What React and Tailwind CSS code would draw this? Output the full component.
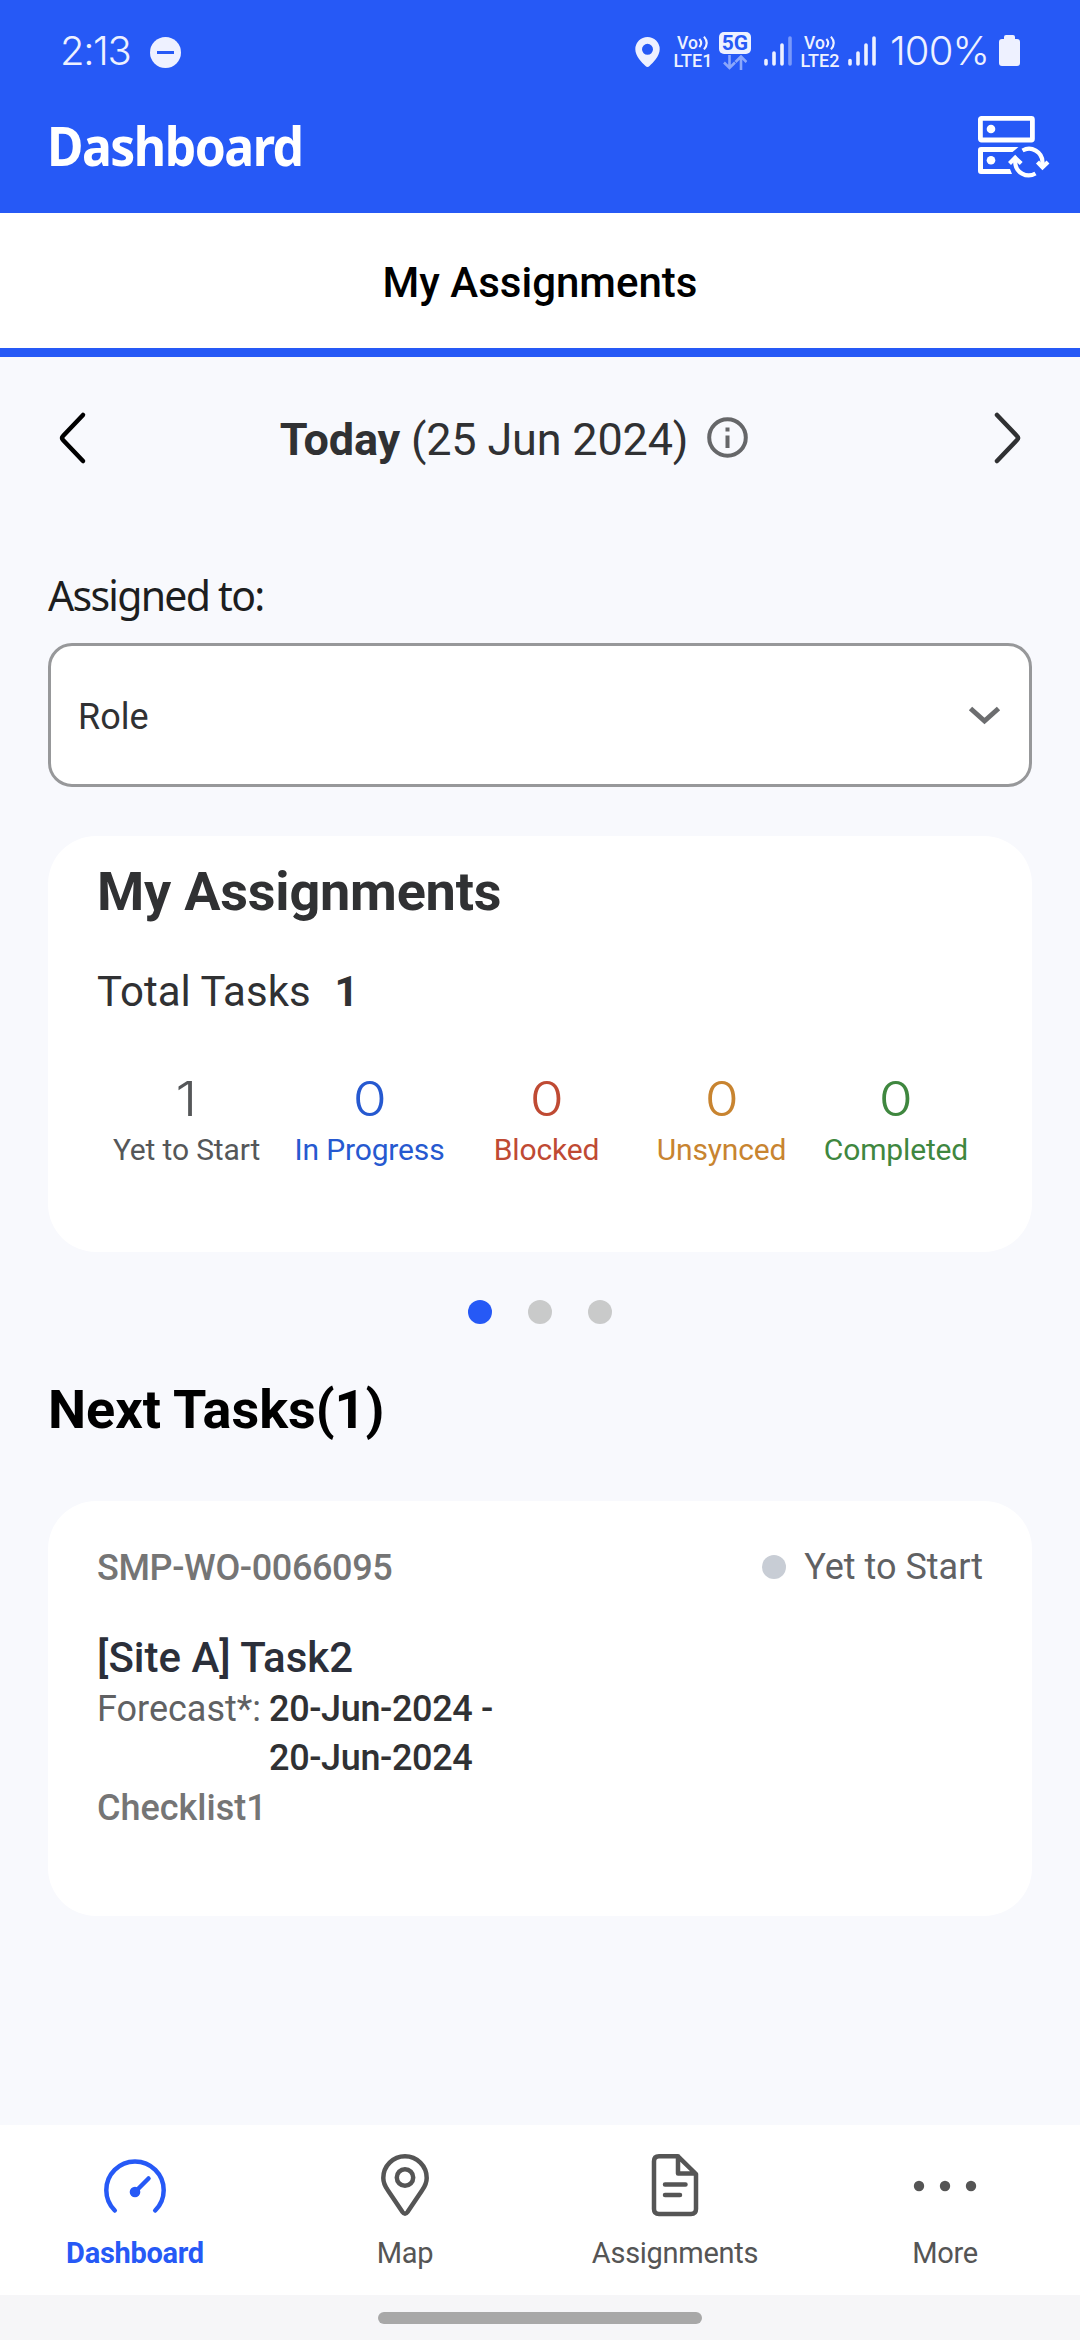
import React from 'react';

const StatusBar = () => {
    return (
        <div className="h-[101px] pl-[60px] pr-[60px] flex items-center text-[#eef1ff]">
            <span className="mt-px text-[40px] leading-none font-[350] tracking-[-0.035em] font-['Inter',sans-serif]">2:13</span>
            <svg className="ml-[20px] mt-1" width="31" height="31" viewBox="0 0 31 31">
                <circle cx="15.5" cy="15.5" r="15.5" fill="currentColor" />
                <path d="M7 15.500h17" stroke="#2659f6" strokeWidth="3" />
            </svg>
            <div className="flex-1" />
            <svg className="mt-0.5" width="25" height="30" viewBox="0 0 25 30">
                <path fill="currentColor" fillRule="evenodd" d="M12.500 0A12.200 12.200 0 0 0 .300 12.200C.300 19 7 25.500 10.500 29q2 2 4 0C18 25.500 24.700 19 24.700 12.200A12.200 12.200 0 0 0 12.500 0Zm0 6.800a5.500 5.500 0 1 1 0 11a5.500 5.500 0 0 1 0-11Z" />
            </svg>
            <VoLte sim="LTE1" className="ml-[12px]" />
            <div className="ml-[5px] w-8 flex flex-col items-center">
                <span className="w-8 h-[22px] rounded-[5px] bg-[#eef1ff] text-[#2659f6] text-[21px] leading-[22px] font-bold text-center font-['Roboto',sans-serif]">5G</span>
                <svg className="mt-px" width="24" height="15" viewBox="0 0 24 15" fill="none" stroke="#8ba7fb" strokeWidth="2.600">
                    <path d="M6.500 0v12.500M1 7.500l5.500 5.500L12 7.500M18 15V2M12.500 7L18 1.500L23.500 7" />
                </svg>
            </div>
            <Signal last="#7a99fa" className="ml-[13px]" />
            <VoLte sim="LTE2" className="ml-[7px]" />
            <Signal last="currentColor" className="ml-[7px]" />
            <span className="ml-[14px] mt-px w-[104px] text-[40px] leading-none font-[350] tracking-[-0.022em] whitespace-nowrap font-['Inter',sans-serif]">100%</span>
            <svg className="ml-[5px]" width="21" height="31" viewBox="0 0 21 31" fill="currentColor">
                <path d="M7 0h7q2 0 2 2v2h2q3 0 3 3v21q0 3-3 3H3q-3 0-3-3V7q0-3 3-3h2V2q0-2 2-2Z" />
            </svg>
        </div>
    );
};

const VoLte = ({ sim, className }) => (
    <div className={`w-[42px] flex flex-col items-center font-['Roboto',sans-serif] font-medium leading-[18px] mt-0.5 ${className}`}>
        <span className="flex items-center text-[17.5px]">
            Vo
            <svg width="11" height="16" viewBox="0 0 12 16" fill="none" stroke="currentColor" strokeWidth="2.300">
                <path d="M1.500 3.500q4 4.500 0 9M6.500 1q6 7 0 14" />
            </svg>
        </span>
        <span className="text-[18px]">{sim}</span>
    </div>
);

const Signal = ({ last, className }) => (
    <svg className={className} width="28" height="30" viewBox="0 0 28 30" strokeWidth="3.600" strokeLinecap="round" stroke="currentColor">
        <path d="M2 24.500V28M10 17V28M18 9V28" />
        <path d="M26 2V28" stroke={last} />
    </svg>
);

const ServerSyncIcon = () => (
    <svg width="74" height="64" viewBox="0 0 74 64" fill="none" stroke="white" strokeWidth="4.800">
        <rect x="2.400" y="2.400" width="52" height="21.600" rx="1" />
        <path fill="white" stroke="none" d="M3 31H40.500L34.500 36H5V53H32L34 58H3Q0 58 0 55V34Q0 31 3 31Z" />
        <circle cx="13" cy="13" r="4.300" fill="white" stroke="none" />
        <circle cx="13" cy="44.300" r="4.300" fill="white" stroke="none" />
        <path strokeWidth="4.200" d="M44.500 34.500A13.500 13.500 0 0 1 64.500 46V50M57.500 57.500A13.500 13.500 0 0 1 37.200 46V43" />
        <path strokeWidth="4.200" d="M59.500 46l5 5.200L70 46M31.500 47.500l5.700-5.700l6 5.700" />
    </svg>
);

const GaugeIcon = () => (
    <svg width="72" height="72" viewBox="0 0 72 72" fill="none" stroke="currentColor" strokeWidth="4.500" strokeLinecap="round">
        <path d="M15.800 59.500A28.700 28.700 0 1 1 56.200 59.500" />
        <path d="M36 41L49.500 27.500" />
        <circle cx="36" cy="41" r="5.300" fill="currentColor" stroke="none" />
    </svg>
);

const PinIcon = () => (
    <svg width="72" height="72" viewBox="0 0 72 72" fill="none" stroke="currentColor" strokeWidth="4.500" strokeLinejoin="round">
        <path d="M36 5.300A21.700 21.700 0 0 0 14.300 27C14.300 32 16.500 36 19 39.500L33.500 61q2.500 3.500 5 0L53 39.500C55.500 36 57.700 32 57.700 27A21.700 21.700 0 0 0 36 5.300Z" />
        <circle cx="36" cy="26.500" r="8.200" />
    </svg>
);

const DocIcon = () => (
    <svg width="72" height="72" viewBox="0 0 72 72" fill="none" stroke="currentColor" strokeWidth="4.500" strokeLinecap="round" strokeLinejoin="round">
        <path d="M39 5.300H20Q15 5.300 15 10.300V58Q15 63 20 63H52Q57 63 57 58V23L39 5.300V22.500H56" />
        <path d="M26 33.500H46.500M26 44H41" />
    </svg>
);

const MoreIcon = () => (
    <svg width="72" height="72" viewBox="0 0 72 72" fill="currentColor">
        <circle cx="10" cy="35" r="5.200" />
        <circle cx="36" cy="35" r="5.200" />
        <circle cx="62" cy="35" r="5.200" />
    </svg>
);

const stats = [
    { label: 'Yet to Start', value: 1, style: 'w-[175px] text-[#555759]' },
    { label: 'In Progress', value: 0, style: 'w-[191px] text-[#2659d0]' },
    { label: 'Blocked', value: 0, style: 'w-[163px] text-[#bf4a33]' },
    { label: 'Unsynced', value: 0, style: 'w-[187px] text-[#c88430]' },
    { label: 'Completed', value: 0, style: 'w-[162px] text-[#3f873f]' },
];

const navItems = [
    { label: 'Dashboard', icon: GaugeIcon, style: 'text-[#2659f6] font-bold' },
    { label: 'Map', icon: PinIcon, style: 'text-[#555555]' },
    { label: 'Assignments', icon: DocIcon, style: 'text-[#555555]' },
    { label: 'More', icon: MoreIcon, style: 'text-[#555555]' },
];

const App = () => {
    return (
        <div className="w-[1080px] h-[2340px] flex flex-col bg-[#f8f9fd] font-['Roboto',sans-serif] text-[#303133] overflow-hidden">
            {/* Header */}
            <header className="h-[213px] shrink-0 bg-[#2659f6]">
                <StatusBar />
                <div className="h-[94px] pl-[47px] pr-7 flex items-center justify-between text-white">
                    <h1 className="mb-[6px] text-[53px] leading-none font-bold tracking-[-0.03em] origin-left scale-x-[0.94] font-['Noto_Sans',sans-serif]">Dashboard</h1>
                    <ServerSyncIcon />
                </div>
            </header>

            {/* Tab */}
            <div className="h-36 shrink-0 bg-white border-b-[9px] border-[#2659f6] pt-[4px] flex items-center justify-center">
                <span className="text-[42px] leading-none font-medium text-black">My Assignments</span>
            </div>

            {/* Date switcher */}
            <div className="h-[162px] shrink-0 px-[57px] flex items-center justify-between">
                <svg width="30" height="54" viewBox="0 0 30 54" fill="none" stroke="black" strokeWidth="4.500" strokeLinecap="round" strokeLinejoin="round">
                    <path d="M26 4L6 25Q4 27 6 29L26 50" />
                </svg>
                <div className="flex items-center gap-[19px] -translate-x-[26px]">
                    <span className="mt-[3px] text-[45px] leading-none tracking-[-0.004em]"><b>Today</b> (25 Jun 2024)</span>
                    <svg className="-mt-[2px]" width="41" height="41" viewBox="0 0 41 41" fill="none" stroke="#666769" strokeWidth="4">
                        <circle cx="20.500" cy="20.500" r="18.300" />
                        <path d="M20.500 18.500V31M20.500 10.500V14.500" />
                    </svg>
                </div>
                <svg width="30" height="54" viewBox="0 0 30 54" fill="none" stroke="#303133" strokeWidth="4.500" strokeLinecap="round" strokeLinejoin="round">
                    <path d="M4 4L24 25Q26 27 24 29L4 50" />
                </svg>
            </div>

            <main className="flex-1 px-12">
                {/* Role filter */}
                <label className="block mt-[50px] text-[41px] leading-[52px] tracking-[-0.042em] text-[#1d1e20] font-['Noto_Sans',sans-serif]">Assigned to:</label>
                <div className="mt-[22px] h-36 rounded-3xl border-[3px] border-[#97989a] bg-white pl-[27px] pr-7 flex items-center justify-between">
                    <span className="mt-1 text-[36px] leading-none">Role</span>
                    <svg width="34" height="19" viewBox="0 0 34 19" fill="none" stroke="#6c6d6f" strokeWidth="5">
                        <path d="M3.500 2.500L17.500 15L31.500 2.500" />
                    </svg>
                </div>

                {/* Assignment summary */}
                <section className="mt-[49px] h-[416px] rounded-[48px] bg-white pt-[25px] px-[49px]">
                    <h2 className="text-[54px] leading-[62px] font-bold tracking-[-0.004em]">My Assignments</h2>
                    <p className="mt-[44px] text-[42px] leading-[50px] flex gap-[24px]">
                        <span>Total Tasks</span>
                        <b>1</b>
                    </p>
                    <div className="mt-[52px] pl-[2px] flex">
                        {stats.map((stat) => (
                            <div key={stat.label} className={`flex flex-col items-center shrink-0 ${stat.style}`}>
                                <span className="text-[48px] leading-[60px] font-[350] scale-x-[1.15] font-['Inter',sans-serif]">{stat.value}</span>
                                <span className="mt-[3px] text-[30px] leading-[36px] tracking-[-0.005em] whitespace-nowrap">{stat.label}</span>
                            </div>
                        ))}
                    </div>
                </section>

                {/* Carousel dots */}
                <div className="mt-12 flex justify-center gap-9">
                    <span className="size-6 rounded-full bg-[#2659f6]" />
                    <span className="size-6 rounded-full bg-[#c9caca]" />
                    <span className="size-6 rounded-full bg-[#c9caca]" />
                </div>

                <h2 className="mt-[54px] text-[54px] leading-[64px] font-bold text-black">Next Tasks(1)</h2>

                {/* Task card */}
                <section className="mt-[59px] h-[415px] rounded-[48px] bg-white pt-[43px] px-[49px] text-[36px] leading-[49px]">
                    <div className="h-[50px] flex items-start justify-between">
                        <span className="font-medium text-[#757575] tracking-[-0.01em]">SMP-WO-0066095</span>
                        <span className="flex items-center gap-[18px] leading-[46px] text-[#606163]">
                            <span className="size-6 rounded-full bg-[#c8cdd5]" />
                            Yet to Start
                        </span>
                    </div>
                    <h3 className="mt-[38px] text-[42px] leading-[52px] font-medium text-[#2b2f3a]">[Site A] Task2</h3>
                    <div className="mt-px flex gap-2">
                        <span className="text-[#606163]">Forecast*:</span>
                        <span className="font-medium tracking-[-0.01em]">20-Jun-2024 -<br />20-Jun-2024</span>
                    </div>
                    <p className="mt-px font-medium text-[#757575]">Checklist1</p>
                </section>
            </main>

            {/* Bottom navigation */}
            <nav className="h-[170px] shrink-0 bg-white grid grid-cols-4 pt-[26px]">
                {navItems.map(({ label, icon: Icon, style }) => (
                    <div key={label} className={`flex flex-col items-center text-[29px] leading-[36px] tracking-[-0.01em] ${style}`}>
                        <Icon />
                        <span className="mt-[12px]">{label}</span>
                    </div>
                ))}
            </nav>
            <div className="h-[45px] shrink-0 bg-[#f6f6f8] flex items-center justify-center">
                <span className="w-[324px] h-3 rounded-full bg-[#a8a8a8]" />
            </div>
        </div>
    );
};

export default App;
